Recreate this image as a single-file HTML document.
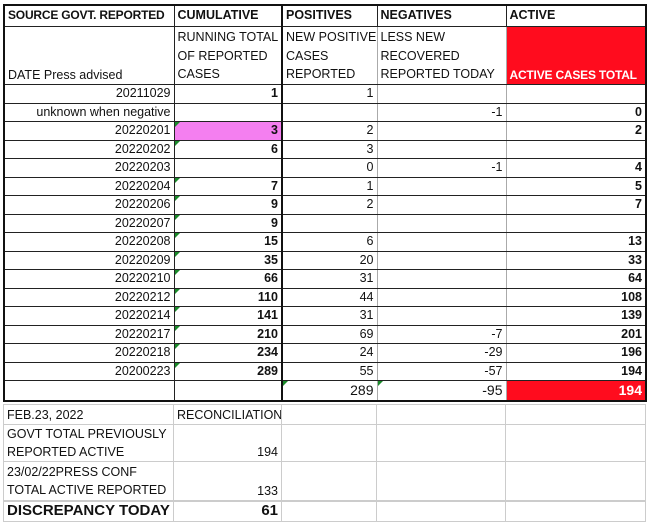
<!DOCTYPE html>
<html><head><meta charset="utf-8"><style>
html,body{margin:0;padding:0;background:#fff;width:650px;height:523px;overflow:hidden;font-family:"Liberation Sans",sans-serif;font-size:12.5px;color:#111}
.t{position:absolute;border-collapse:collapse;table-layout:fixed}
.t td{padding:0 3px;overflow:hidden;white-space:nowrap;line-height:15px;position:relative}
.r{text-align:right}
.b{font-weight:bold}
.top td{border-top:1px solid #222;border-bottom:1px solid #222}
.c1{border-left:2px solid #111;border-right:1px solid #222}
.c2{border-right:2px solid #111}
.c3{border-right:1px solid #aaa}
.c4{border-right:1px solid #aaa}
.c5{border-right:2px solid #111}
.h{font-size:12px;letter-spacing:-0.2px}
.pink{background:#f47ff0}
.red{background:#ff0c1e;color:#fff;font-weight:bold}
.g::before{content:"";position:absolute;left:0;top:0;border-top:5px solid #1a8a2a;border-right:5px solid transparent}
.bot td{border:1px solid #ccc;line-height:18px;padding:0 3px;white-space:nowrap}
</style></head><body>
<table class="t top" style="left:3px;top:4px;width:642px;border:2px solid #111">
<colgroup><col style="width:170px"><col style="width:108px"><col style="width:95px"><col style="width:129px"><col style="width:140px"></colgroup>
<tr style="height:21px" class="b"><td class="c1 b h">SOURCE GOVT. REPORTED</td><td class="c2 b">CUMULATIVE</td><td class="c3 b" style="border-right:1px solid #222">POSITIVES</td><td class="c4 b" style="border-right:1px solid #222">NEGATIVES</td><td class="c5 b">ACTIVE</td></tr>
<tr style="height:58px"><td class="c1" style="vertical-align:bottom;line-height:18px">DATE Press advised</td><td class="c2" style="vertical-align:bottom;line-height:18.5px">RUNNING TOTAL<br>OF REPORTED<br>CASES</td><td class="c3" style="vertical-align:bottom;line-height:18.5px">NEW POSITIVE<br>CASES<br>REPORTED</td><td class="c4" style="vertical-align:bottom;line-height:18.5px">LESS NEW<br>RECOVERED<br>REPORTED TODAY</td><td class="c5 red h" style="vertical-align:bottom;line-height:18px">ACTIVE CASES TOTAL</td></tr>
<tr style="height:19px"><td class="c1 r">20211029</td><td class="c2 r b">1</td><td class="c3 r">1</td><td class="c4"></td><td class="c5"></td></tr>
<tr style="height:18px"><td class="c1 r">unknown when negative</td><td class="c2"></td><td class="c3"></td><td class="c4 r">-1</td><td class="c5 r b">0</td></tr>
<tr style="height:19px"><td class="c1 r">20220201</td><td class="c2 r b pink g">3</td><td class="c3 r">2</td><td class="c4"></td><td class="c5 r b">2</td></tr>
<tr style="height:18px"><td class="c1 r">20220202</td><td class="c2 r b g">6</td><td class="c3 r">3</td><td class="c4"></td><td class="c5"></td></tr>
<tr style="height:19px"><td class="c1 r">20220203</td><td class="c2"></td><td class="c3 r">0</td><td class="c4 r">-1</td><td class="c5 r b">4</td></tr>
<tr style="height:18px"><td class="c1 r">20220204</td><td class="c2 r b g">7</td><td class="c3 r">1</td><td class="c4"></td><td class="c5 r b">5</td></tr>
<tr style="height:19px"><td class="c1 r">20220206</td><td class="c2 r b g">9</td><td class="c3 r">2</td><td class="c4"></td><td class="c5 r b">7</td></tr>
<tr style="height:18px"><td class="c1 r">20220207</td><td class="c2 r b g">9</td><td class="c3"></td><td class="c4"></td><td class="c5"></td></tr>
<tr style="height:19px"><td class="c1 r">20220208</td><td class="c2 r b g">15</td><td class="c3 r">6</td><td class="c4"></td><td class="c5 r b">13</td></tr>
<tr style="height:18px"><td class="c1 r">20220209</td><td class="c2 r b g">35</td><td class="c3 r">20</td><td class="c4"></td><td class="c5 r b">33</td></tr>
<tr style="height:19px"><td class="c1 r">20220210</td><td class="c2 r b g">66</td><td class="c3 r">31</td><td class="c4"></td><td class="c5 r b">64</td></tr>
<tr style="height:18px"><td class="c1 r">20220212</td><td class="c2 r b g">110</td><td class="c3 r">44</td><td class="c4"></td><td class="c5 r b">108</td></tr>
<tr style="height:19px"><td class="c1 r">20220214</td><td class="c2 r b g">141</td><td class="c3 r">31</td><td class="c4"></td><td class="c5 r b">139</td></tr>
<tr style="height:18px"><td class="c1 r">20220217</td><td class="c2 r b g">210</td><td class="c3 r">69</td><td class="c4 r">-7</td><td class="c5 r b">201</td></tr>
<tr style="height:19px"><td class="c1 r">20220218</td><td class="c2 r b g">234</td><td class="c3 r">24</td><td class="c4 r">-29</td><td class="c5 r b">196</td></tr>
<tr style="height:18px"><td class="c1 r">20200223</td><td class="c2 r b g">289</td><td class="c3 r">55</td><td class="c4 r">-57</td><td class="c5 r b">194</td></tr>
<tr style="height:21px;font-size:14px"><td class="c1"></td><td class="c2"></td><td class="c3 r g">289</td><td class="c4 r g">-95</td><td class="c5 r red">194</td></tr>
</table>
<table class="t bot" style="left:3px;top:404px;width:642px">
<colgroup><col style="width:170px"><col style="width:108px"><col style="width:95px"><col style="width:129px"><col style="width:140px"></colgroup>
<tr style="height:20px"><td>FEB.23, 2022</td><td class="r">RECONCILIATION</td><td></td><td></td><td></td></tr>
<tr style="height:37px"><td>GOVT TOTAL PREVIOUSLY<br>REPORTED ACTIVE</td><td class="r" style="vertical-align:bottom">194</td><td></td><td></td><td></td></tr>
<tr style="height:39px"><td>23/02/22PRESS CONF<br>TOTAL ACTIVE REPORTED</td><td class="r" style="vertical-align:bottom">133</td><td></td><td></td><td></td></tr>
<tr style="height:21px;font-size:15px;font-weight:bold;border-top:2px solid #ccc"><td>DISCREPANCY TODAY</td><td class="r">61</td><td></td><td></td><td></td></tr>
</table>
</body></html>
